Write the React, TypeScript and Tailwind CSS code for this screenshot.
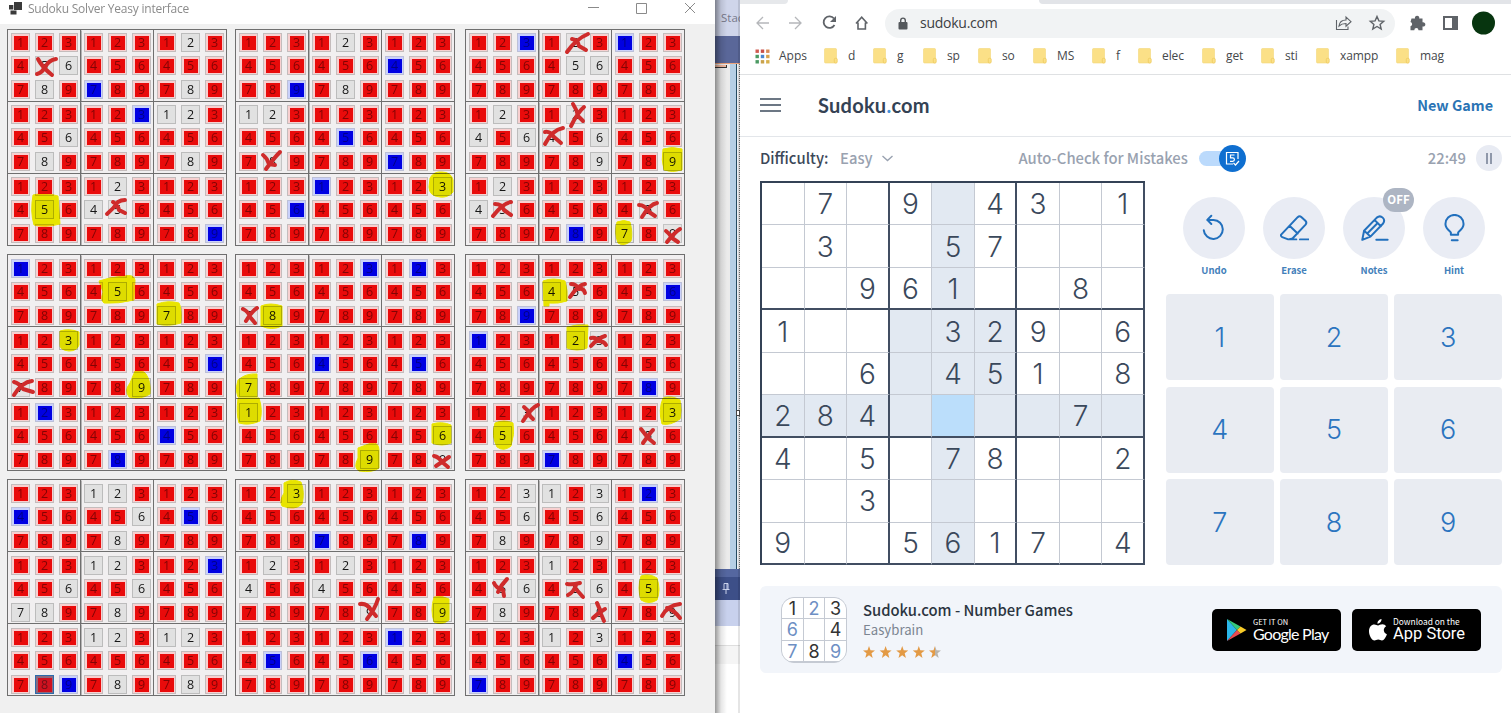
import React from "react";

const BLOCKS: string[][] = [
  ["rrrrxwrwr", "rrrrrrbrr", "rwrrrrrwr", "rrrrrwrwr", "rrbrrrrrr", "wwrrrrrwr", "rrrryrrrr", "rwrwxrrrr", "rrrrrrrrb"],
  ["rrrrrrrrb", "rwrrrrrwr", "rrrbrrrrr", "wwrrrrrxr", "rrrrbrrrr", "rrrrrrbrr", "rrrrrbrrr", "brrrrrrrr", "rryrrrrrr"],
  ["rrbrrrrrr", "rxrrwwrrr", "brrrrrrrr", "rwrwrwrrr", "rxrxrwrrw", "rrrrrrrry", "rwrwxrrrr", "rrrrrrrbr", "rrrrxryrx"],
  ["brrrrrrrr", "rrrryrrrr", "rrrrrryrr", "rryrrrxrr", "rrrrrrrry", "rrrrrbrrr", "rbrrrrrrr", "rrrrrrrbr", "rrrbrrrrr"],
  ["rrrrrrxyr", "rrbrrrrrr", "rbrrrrrrr", "rrrrrryrr", "rrrbrrrrr", "rrrrbrrrr", "yrrrrrrrr", "rrrrrrrry", "rrrrryrrx"],
  ["rrrrrrrrb", "rrryxrrrr", "rrrrrbrrr", "brrrrrrrr", "ryxrrrrrr", "rrrrrrrbr", "rrxryrrrr", "rrrrrrbrr", "rryrxrrrr"],
  ["rrrbrrrrr", "wwrrrwrwr", "rrrrbrrrr", "rrrrrwwwr", "wwrrrwrwr", "rrbrrrrrr", "rrrrrrrsb", "wwrrrrrwr", "wwrrrrrwr"],
  ["rryrrrrrr", "rrrrrrbrr", "rrrrrrrbr", "rwrwrrrrr", "rwrwrrrrx", "rrrrrrrry", "rrrrbrrrr", "rrrrrbrrr", "brrrrrrrr"],
  ["rrwrrwrwr", "wrwrrwrrw", "rbrrrrrrr", "rrrrxwrwr", "wrrrxwrrx", "rrrryrrrx", "rrrrrrbrr", "wrwrrrrrr", "rrrbrrrrr"],
];

const OUTER: Record<string, string> = {
  r: "border-[#c4bcbc] bg-[#f8cfcf]",
  b: "border-[#bcc0d8] bg-[#c9d0fb]",
  w: "border-[#bcbcbc] bg-[#e1e1e1]",
  x: "border-[#c4c4c4] bg-[#e6e4e4]",
  y: "border-[#b4b4b4] bg-[#e6e6e6]",
  s: "border-[#2b6cab] bg-[#8a6a80]",
};
const INNER: Record<string, string> = {
  r: "bg-[#e90b0b] text-[#820404]",
  b: "bg-[#0000e2] text-[#000086]",
  w: "text-[#161616]",
  x: "text-[#161616]",
  y: "text-[#161616]",
  s: "bg-[#cf1220] text-[#701018]",
};

const HIGHLIGHTS = [
  "M33 195 Q45 192 58 196 L60 224 Q45 228 34 225 Q30 212 33 195Z",
  "M430 178 Q434 171 442 172 Q451 172 453 180 V192 Q448 198 440 197 Q429 196 429 187Z",
  "M663 149 Q672 146 682 149 V170 Q672 173 664 170 Q661 160 663 149Z",
  "M617 222 Q624 219 630 222 Q633 233 631 241 Q624 247 618 243 Q614 233 617 222Z",
  "M99 281 Q110 277 124 276 Q134 274 135 280 L134 300 Q118 304 104 303 Q100 300 103 292Z",
  "M157 304 Q168 300 179 303 Q182 308 181 323 Q168 327 157 324Z",
  "M60 331 Q69 328 79 332 V345 Q77 351 69 351 Q59 350 60 344Z",
  "M135 371 Q142 369 146 374 Q151 381 150 394 Q141 400 129 397 Q124 390 130 383Z",
  "M261 306 Q270 302 282 306 V326 Q272 331 261 326Z",
  "M238 380 Q246 373 257 374 V397 H238 Q235 390 238 380Z",
  "M238 398 H259 Q263 410 260 421 Q249 426 239 423 Q236 414 238 398Z",
  "M358 448 Q366 445 371 443 Q379 442 379 450 V468 Q373 473 359 471 Q353 468 358 458Z",
  "M432 424 Q442 421 451 425 V443 Q442 447 432 443Z",
  "M543 281 Q553 277 565 281 Q568 290 567 301 Q558 304 549 303 V306 H544Z",
  "M567 327 Q577 324 588 325 L587 348 Q577 352 567 348Z",
  "M495 423 Q504 419 513 423 Q515 434 511 446 Q504 452 497 447 Q491 436 495 423Z",
  "M663 398 Q672 395 680 400 Q682 411 680 419 Q670 426 662 424 Q658 410 663 398Z",
  "M284 483 Q292 478 301 482 Q305 492 302 504 Q295 511 282 506 Q279 501 284 493Z",
  "M434 597 Q442 595 449 599 V620 Q442 626 434 622 Q430 610 434 597Z",
  "M641 576 Q649 573 657 578 Q661 590 657 600 Q649 605 641 600 Q637 588 641 576Z",
];

const CROSSES = [
  "M38 59 Q42 67 52 75 M56 59 Q49 60 45 67 Q42 73 37 74",
  "M107 214 Q114 208 118 202 Q121 200 125 200 M113 202 Q118 205 119 210 L125 213",
  "M280 152 Q274 158 266 169 M263 155 Q267 158 269 164 L275 165",
  "M588 34 Q576 39 567 52 M572 39 Q578 40 579 46 L586 50",
  "M584 107 Q578 112 571 126 M573 104 Q577 110 578 116 L583 121",
  "M563 128 Q552 130 545 144 M545 132 Q550 131 554 137 L561 143",
  "M511 202 Q503 203 493 216 M495 204 Q502 204 504 210 L511 215",
  "M657 203 Q650 204 642 217 M639 205 Q645 205 649 212 L655 216",
  "M680 229 Q675 232 667 242 M666 231 Q670 234 672 238 L678 242",
  "M32 381 Q22 382 14 395 M14 382 Q19 383 23 389 L33 392",
  "M257 308 Q252 311 246 321 M243 309 Q249 312 250 317 L255 323",
  "M449 457 Q442 462 436 466 M434 456 Q439 457 442 462 L448 467",
  "M585 284 Q578 285 570 297 M571 284 Q576 284 579 289 Q584 288 585 293",
  "M605 336 Q598 338 591 346 M591 338 Q596 337 598 341 Q604 341 606 345",
  "M538 405 Q532 407 523 421 M524 407 Q529 411 530 416 L533 419",
  "M653 430 Q650 433 643 443 M641 429 Q645 434 648 438 L654 443",
  "M378 599 Q375 609 367 619 M360 604 Q367 603 371 610 L376 616",
  "M507 579 Q501 585 498 592 M494 583 Q496 588 503 590 L504 596",
  "M567 584 Q572 585 580 583 M568 595 Q574 592 576 585 M575 588 L583 597",
  "M605 609 Q598 613 593 618 M597 603 Q600 609 601 614 L604 621",
  "M680 604 Q668 605 662 616 M667 608 Q674 610 680 618",
];

function Block({ cells, lowered }: { cells: string[]; lowered: boolean }) {
  return (
    <div className="grid h-[217px] w-[220px] grid-cols-3 border-l border-t border-[#6f6f6f] bg-[#f1eff0]">
      {cells.map((cell, i) => (
        <div
          key={i}
          className={`grid h-[72px] grid-cols-[24px_24px_19px] grid-rows-[23px_24px_18px] border-b border-r border-[#6f6f6f] pl-[3px] ${lowered ? "pt-[4px]" : "pt-[3px]"} ${i % 3 === 0 ? "shadow-[1px_0_0_-0.5px_#777]" : ""}`}
        >
          {cell.split("").map((s, n) => (
            <div key={n} className={`flex h-[19px] w-[19px] items-center justify-center border ${OUTER[s]}`}>
              <span className={`flex h-[14px] w-[14px] items-center justify-center text-[12.5px] leading-none ${INNER[s]}`}>
                <span className="relative top-[1px]">{n + 1}</span>
              </span>
            </div>
          ))}
        </div>
      ))}
    </div>
  );
}

function SolverWindow() {
  return (
    <section className="relative flex h-[713px] w-[715px] shrink-0 flex-col bg-[#f0f0f0] font-['Open_Sans',sans-serif]">
      <header className="flex h-6 shrink-0 items-start bg-white pl-[9px]">
        <svg width="13" height="13" viewBox="0 0 13 13" className="mt-[2px]" fill="#3a3a3a">
          <rect x="5" y="0" width="8" height="8" />
          <rect x="0" y="3" width="4.3" height="4.5" />
          <rect x="1.5" y="8.5" width="6" height="4" />
        </svg>
        <span className="ml-[6px] mt-[1px] w-[165px] whitespace-nowrap text-[12px] leading-4 tracking-[-0.22px] text-[#8b8b8b]">Sudoku Solver Yeasy interface</span>
        <svg width="110" height="14" viewBox="0 0 110 14" className="ml-[394px] mt-[1px]" fill="none" stroke="#8a8a8a">
          <path d="M1 6.5h11M49.500 2.500h10v10h-10zM98 2l10 10M108 2l-10 10" />
        </svg>
      </header>
      <div className="grid grid-cols-[228px_230px_220px] grid-rows-[225px_225px_217px] pl-[7px] pt-[5px]">
        {BLOCKS.map((b, i) => (
          <Block key={i} cells={b} lowered={i > 2} />
        ))}
      </div>
      <svg className="pointer-events-none absolute left-0 top-0 mix-blend-multiply" width="715" height="713" fill="#f6f400">
        {HIGHLIGHTS.map((d) => (
          <path key={d} d={d} stroke="#f6f400" strokeLinejoin="round" />
        ))}
      </svg>
      <svg className="pointer-events-none absolute left-0 top-0" width="715" height="713" fill="none" stroke="#cf2b2b" strokeWidth="4" strokeLinecap="round" strokeLinejoin="round">
        {CROSSES.map((d) => (
          <path key={d} d={d} />
        ))}
      </svg>
    </section>
  );
}

function BackgroundStrip() {
  return (
    <div className="relative flex h-[713px] w-[25px] shrink-0 flex-col overflow-hidden bg-white font-['Open_Sans',sans-serif]">
      <div className="h-9 overflow-hidden bg-[#cfd5ea] pl-[6px] pt-[10px] text-[11.500px] leading-4 text-[#77798a]">Stac</div>
      <div className="h-[27px] bg-[#5a6799]" />
      <div className="flex h-[506px] justify-end border-t border-[#e9a27c] bg-[#ebebeb]">
        <div className="mt-[1px] h-[3px] w-[12px] border-b border-r border-[#333] bg-[#f3b9a0]" />
        <div className="w-[3px]" />
        <div className="w-[6px] bg-[#b5cfe5]" />
        <div className="w-[1px] bg-[#234a60]" />
        <div className="w-[3px] border-r border-dotted border-[#777] bg-[#eef0f2]" />
      </div>
      <div className="h-2 bg-[#5567a0]" />
      <div className="flex h-[23px] items-center justify-center bg-[#3d4f88] pr-[3px]">
        <svg width="8" height="12" viewBox="0 0 8 12" fill="none" stroke="#cdd5ee">
          <path d="M2 .5h4v5.500M2 .5v5.500M5 1v5M.5 6.500h7M4 6.500V11" />
        </svg>
      </div>
      <div className="h-[26px] bg-[#c8d1ed]" />
      <div className="h-5 border-b border-[#dedede] bg-white" />
      <div className="h-[18px] bg-[#f5f5f5]" />
      <div className="absolute inset-y-0 left-0 w-3 bg-gradient-to-r from-black/40 via-black/10 to-transparent" />
      <div className="absolute inset-y-0 right-0 w-[2px] bg-black/10" />
      <div className="absolute right-0 top-[410px] h-[6px] w-[4px] border border-[#444] bg-white" />
    </div>
  );
}

const BOOKMARKS: [string, string][] = [
  ["d", "w-[49px]"], ["g", "w-[50px]"], ["sp", "w-[55px]"], ["so", "w-[55px]"], ["MS", "w-[59px]"], ["f", "w-[46px]"],
  ["elec", "w-[64px]"], ["get", "w-[59px]"], ["sti", "w-[55px]"], ["xampp", "w-[80px]"], ["mag", "w-[60px]"],
];
const APP_DOTS = ["#d05a50", "#c9514a", "#d98a55", "#4b9a62", "#4a86cf", "#d8a34c", "#4b9a62", "#c9a24c", "#d8b04c"];

function BrowserChrome() {
  return (
    <div className="flex h-[75px] shrink-0 flex-col border-b border-[#dfe1e3] font-['Open_Sans',sans-serif]">
      <div className="flex h-1 justify-between">
        <div className="w-12 rounded-br-[6px] bg-[#e6e8eb]" />
        <div className="w-[472px] rounded-bl-[6px] bg-[#e2e4e8]" />
      </div>
      <div className="flex h-[38px] items-center pl-[15px] text-[#5f6368]">
        <svg width="118" height="18" viewBox="0 0 118 18" fill="none" stroke="#5f6368" strokeWidth="1.6">
          <path stroke="#b5b7ba" strokeWidth="1.300" d="M14 9H2M8 3 2 9l6 6M34 9h12M40 3l6 6-6 6" />
          <path strokeWidth="1.800" d="M79 4.500A5.800 5.800 0 1 0 79.500 11" />
          <path fill="#5f6368" stroke="none" d="M81 2v6h-6z" />
          <path d="M101 9.500l5.700-6.200 5.700 6.200M103 8.500V15h7.400V8.500" />
        </svg>
        <div className="ml-[12px] flex h-[29px] w-[510px] items-center rounded-full bg-[#f1f3f4] pl-[13px] pr-[8px]">
          <svg width="10" height="13" viewBox="0 0 10 13">
            <path fill="none" stroke="#54585c" strokeWidth="1.400" d="M2.700 6V3.400a2.300 2.300 0 0 1 4.600 0V6" />
            <rect x=".5" y="5" width="9" height="7.500" rx="1" fill="#54585c" />
          </svg>
          <span className="ml-[12px] text-[14px] leading-5 tracking-[-0.25px] text-[#3c4043]">sudoku.com</span>
          <svg width="52" height="18" viewBox="0 0 52 18" className="ml-auto" fill="none" stroke="#5f6368" strokeWidth="1.100">
            <path d="M1.500 6v9.500h11.500v-3M4 12c.5-4 3-6 7-6V3l5 4.700-5 4.500V9.500C8 9.500 6 10 4 12z" />
            <path strokeWidth="1.400" d="m42 2.500 1.900 4.400 4.800.4-3.600 3.100 1.100 4.600-4.200-2.500-4.200 2.500 1.100-4.600-3.600-3.100 4.800-.4z" />
          </svg>
        </div>
        <svg width="96" height="24" viewBox="0 0 96 24" className="ml-[13px]" fill="#5f6368">
          <path d="M3.500 7.500H7a2.200 2.200 0 1 1 4.200 0h3.300v3.800a2.200 2.200 0 1 1 0 4.200v3.700h-4a2.100 2.100 0 0 0-4.200 0H2.500v-4a2.100 2.100 0 0 0 0-4.100z" />
          <path fillRule="evenodd" d="M35 5h15v14H35zM37 7v10h7V7z" />
          <circle cx="75.500" cy="12" r="11.500" fill="#07350f" />
        </svg>
      </div>
      <div className="flex h-7 items-center pl-[15px] text-[12px] leading-4 text-[#45484b]">
        <svg width="15" height="15" viewBox="0 0 15 15">
          {APP_DOTS.map((c, i) => (
            <rect key={i} x={(i % 3) * 5.3 + 0.5} y={Math.floor(i / 3) * 5.3 + 0.5} width="3.400" height="3.400" fill={c} />
          ))}
        </svg>
        <span className="ml-[9px] w-[45px]">Apps</span>
        {BOOKMARKS.map(([name, width]) => (
          <div key={name} className={`flex shrink-0 items-center ${width}`}>
            <svg width="14" height="16" viewBox="0 0 14 16" className="shrink-0">
              <rect x=".5" y=".5" width="12" height="14.500" rx="1" fill="#fbe087" stroke="#f3d679" strokeWidth=".6" />
              <rect x="10.300" y="10.300" width="2.900" height="4.700" rx="1" fill="#fbe087" stroke="#eec95a" strokeWidth=".7" />
            </svg>
            <span className="ml-[10px] tracking-[-0.100px]">{name}</span>
          </div>
        ))}
      </div>
    </div>
  );
}

const BOARD = ["_7_9_43_1", "_3__57___", "__961__8_", "1___329_6", "__6_451_8", "284____7_", "4_5_78__2", "__3______", "9__5617_4"];

function Board() {
  return (
    <div className="grid h-[384px] w-[385px] grid-cols-9 grid-rows-9 border-l-2 border-t-2 border-[#344256] font-['Inter',sans-serif] text-[28px] font-[350] text-[#3a485b]">
      {BOARD.flatMap((row, r) =>
        row.split("").map((v, c) => {
          const inBox = r > 2 && r < 6 && c > 2 && c < 6;
          const bg = r === 5 && c === 4 ? "bg-[#bbdefb]" : c === 4 || r === 5 || inBox ? "bg-[#e2e9f2]" : "";
          const right = c % 3 === 2 ? "border-r-2 border-r-[#414e62]" : "border-r border-r-[#c4c9d2]";
          const bottom = r % 3 === 2 ? "border-b-2 border-b-[#414e62]" : "border-b border-b-[#c4c9d2]";
          return (
            <div key={`${r}-${c}`} className={`flex min-h-0 min-w-0 items-center justify-center pt-[1px] leading-none ${bg} ${right} ${bottom}`}>
              {v === "_" ? "" : v}
            </div>
          );
        })
      )}
    </div>
  );
}

const TOOLS: { name: string; art: React.ReactNode }[] = [
  {
    name: "Undo",
    art: <path d="M8 6.500h7a10.500 10.500 0 1 1-10.800 11.500M12.500 2 8 6.500 12.500 11" />,
  },
  {
    name: "Erase",
    art: <path d="M9 28h9M22 28h9.500M1 23 19.500 3.500q2-2 4-.2l4.500 4.200q2 2 .2 4.200L13.800 27Q12 28 9 28L2.500 25.500q-1.800-1-1.500-2.500zM10.500 13l9 8.500" />,
  },
  {
    name: "Notes",
    art: <path d="M2.500 28.500 4.500 18.500 18.500 4q3.500-2.800 6.500 0t.5 6.500L11.500 25zM16 6.500l7 7M19.500 10 8 21.500M4.500 18.500l3.500 3 3.500 3.500M18 28.500h12.500" />,
  },
  {
    name: "Hint",
    art: <path d="M12 23v-2.500c0-1-6-4-6-9.500a10 10 0 0 1 20 0c0 5.500-6 8.500-6 9.500V23zM13 29h6.500" />,
  },
];

function Controls() {
  return (
    <div className="w-[336px]">
      <div className="flex h-[113px] pl-2 pt-4">
        {TOOLS.map((t) => (
          <div key={t.name} className="relative flex w-20 flex-col items-center">
            <div className="flex h-[62px] w-[62px] shrink-0 items-center justify-center rounded-full bg-[#e9ecf4]">
              <svg width="29" height="29" viewBox="0 0 32 32" fill="none" stroke="#2270bd" strokeWidth="2.200" strokeLinecap="round" strokeLinejoin="round">
                {t.art}
              </svg>
            </div>
            <span className="mt-[3px] text-[9.500px] font-bold leading-4 text-[#4380ba]">{t.name}</span>
            {t.name === "Notes" && (
              <span className="absolute left-[49px] top-[-9px] flex h-6 w-[31px] items-center justify-center rounded-full bg-[#adb5c3] text-[11.500px] font-bold leading-none text-white">OFF</span>
            )}
          </div>
        ))}
      </div>
      <div className="grid h-[271px] grid-cols-3 grid-rows-3 gap-[6.500px] font-['Inter',sans-serif] text-[27px] font-[350] text-[#2b74bf]">
        {[1, 2, 3, 4, 5, 6, 7, 8, 9].map((n) => (
          <div key={n} className="flex items-center justify-center rounded-[4px] bg-[#e9ecf2] pt-[2px]">{n}</div>
        ))}
      </div>
    </div>
  );
}

function Banner() {
  return (
    <div className="ml-5 mt-[21px] flex h-[87px] w-[742px] items-center rounded-[6px] bg-[#f2f5fa] px-[21px]">
      <div className="grid h-[66px] w-[66px] grid-cols-3 grid-rows-3 gap-px overflow-hidden rounded-[13px] border border-[#c5cad3] bg-[#c5cad3] font-['Inter',sans-serif] text-[18px] leading-none text-[#333]">
        {["1", "2", "3", "6", "", "4", "7", "8", "9"].map((n, i) => (
          <span key={i} className={`flex items-center justify-center bg-white pt-[2px] ${[1, 3, 6, 8].includes(i) ? "text-[#6e8fc4]" : ""}`}>{n}</span>
        ))}
      </div>
      <div className="ml-4 flex flex-col pt-[1px]">
        <span className="text-[14.800px] font-medium leading-5 text-[#2b3440]">Sudoku.com - Number Games</span>
        <span className="text-[13.200px] leading-5 text-[#7c8591]">Easybrain</span>
        <svg width="80" height="16" viewBox="0 0 80 16" className="mt-[4px]" fill="#e39a45">
          {[0, 1, 2, 3].map((i) => (
            <path key={i} transform={`translate(${i * 16.6} 1)`} d="m6 1 1.500 4.200 4.500.2-3.500 2.800L9.700 13 6 10.300 2.300 13l1.200-4.800L0 5.400l4.500-.2z" />
          ))}
          <g transform="translate(66 1)">
            <path fill="#b9b4ac" d="m6 1 1.500 4.200 4.500.2-3.500 2.800L9.700 13 6 10.300z" />
            <path d="M6 1v9.300L2.300 13l1.200-4.800L0 5.400l4.500-.2z" />
          </g>
        </svg>
      </div>
      <div className="ml-auto flex gap-[11px] text-white">
        <div className="flex h-[42px] w-[129px] items-center rounded-[5px] bg-black pl-[14px]">
          <svg width="21" height="24" viewBox="0 0 21 24">
            <path fill="#2bb7ea" d="M1 1v22l10-11z" />
            <path fill="#35c97b" d="m1 1 13.500 7.500L11 12z" />
            <path fill="#ea4a50" d="m1 23 13.500-7.500L11 12z" />
            <path fill="#f8cc28" d="m14.500 8.500 6 3.500-6 3.500L11 12z" />
          </svg>
          <div className="ml-[6px] flex flex-col whitespace-nowrap">
            <span className="text-[7.500px] leading-[9px]">GET IT ON</span>
            <span className="font-['Lato',sans-serif] text-[16px] leading-[16px] tracking-[-0.750px]">Google Play</span>
          </div>
        </div>
        <div className="flex h-[42px] w-[129px] items-center rounded-[5px] bg-black pl-[17px]">
          <svg width="18" height="22" viewBox="0 0 18 22" fill="white">
            <path d="M12.500 0c.2 2.500-1.800 4.700-4 4.700C8.200 2.500 10.200.3 12.500 0zM9 6.500C10 6.500 11.300 5.300 13.500 5.300c1.500 0 2.800.8 3.700 2-3.500 2-3 6.500.7 8C16.800 18.500 15 21.500 13 21.500c-1.500 0-2-.9-3.800-.9s-2.300.9-3.700.9C2.800 21.500 0 16.500 0 12.200 0 8 2.500 5.500 5.300 5.500 7 5.500 8 6.500 9 6.500z" />
          </svg>
          <div className="ml-[6px] flex flex-col whitespace-nowrap">
            <span className="text-[8.400px] leading-[9px]">Download on the</span>
            <span className="font-['Roboto',sans-serif] text-[16.500px] leading-[16px]">App Store</span>
          </div>
        </div>
      </div>
    </div>
  );
}

function BrowserWindow() {
  return (
    <section className="flex h-[713px] w-[771px] shrink-0 flex-col bg-white font-['Noto_Sans_CJK_SC',sans-serif]">
      <BrowserChrome />
      <header className="flex h-[62px] shrink-0 items-center border-b border-[#e3e6ea] pb-[1px] pl-5 pr-[18px]">
        <svg width="21" height="14" viewBox="0 0 21 14" stroke="#3d4b5c" strokeWidth="1.600">
          <path d="M0 1h21M0 7h21M0 13h21" />
        </svg>
        <span className="ml-[37px] font-['Lato',sans-serif] text-[20px] font-bold leading-6 tracking-[0.250px] text-[#344254]">
          Sudoku<span className="text-[#3f8fd8]">.</span>com
        </span>
        <span className="ml-auto text-[14.400px] font-bold leading-5 text-[#2b74b5]">New Game</span>
      </header>
      <div className="flex h-[44px] shrink-0 items-center pb-[2px] pl-5 text-[14.800px] font-medium leading-5 text-[#99a2b0]">
        <span className="w-[80px] text-[#3c4858]">Difficulty:</span>
        <span>Easy</span>
        <svg width="11" height="7" viewBox="0 0 11 7" className="ml-[9px]" fill="none" stroke="#99a2b0" strokeWidth="1.400">
          <path d="m.5 1 5 4.500 5-4.500" />
        </svg>
        <div className="ml-auto flex items-center">
          <span>Auto-Check for Mistakes</span>
          <div className="ml-[11px] flex h-[15px] w-[47px] items-center rounded-full bg-gradient-to-r from-[#bbdafc] from-85% to-transparent to-85%">
            <div className="ml-5 flex h-[27px] w-[27px] shrink-0 items-center justify-center rounded-full bg-[#0f6fd0]">
              <svg width="15" height="15" viewBox="0 0 15 15" fill="none" stroke="white" strokeWidth="1.200">
                <path d="M8 13H1.500V1.500h11.500V8M9.500 4H5.500v2.800h2.200c2.300 0 2.300 3.500 0 3.500H5M8.500 12l2 2 3.500-4" />
              </svg>
            </div>
          </div>
        </div>
        <span className="ml-[182px]">22:49</span>
        <div className="ml-[10px] mr-[9px] flex h-[26px] w-[26px] items-center justify-center gap-[2px] rounded-full bg-[#e8ebf3]">
          <span className="h-[11px] w-[2px] bg-[#8f98aa]" />
          <span className="h-[11px] w-[2px] bg-[#8f98aa]" />
        </div>
      </div>
      <div className="flex shrink-0 pl-5">
        <Board />
        <div className="ml-[21px]">
          <Controls />
        </div>
      </div>
      <Banner />
    </section>
  );
}

export default function App() {
  return (
    <main className="flex h-[713px] w-[1511px] overflow-hidden">
      <SolverWindow />
      <BackgroundStrip />
      <BrowserWindow />
    </main>
  );
}
